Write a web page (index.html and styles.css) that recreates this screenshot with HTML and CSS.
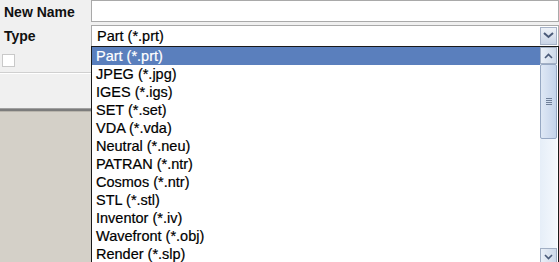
FILE: index.html
```html
<!DOCTYPE html>
<html lang="en">
<head>
  <meta charset="UTF-8">
  <title>Save As</title>
  <link rel="stylesheet" href="styles.css">
</head>
<body>
<div class="dialog">
  <div class="form">
    <div class="row">
      <label class="label">New Name</label>
      <div class="text-input"></div>
    </div>
    <div class="row">
      <label class="label">Type</label>
      <div class="combo">
        <span class="combo-value">Part (*.prt)</span>
        <span class="combo-btn">
          <svg width="11" height="7" viewBox="0 0 11 7"><path d="M1 1 L5.5 5 L10 1" fill="none" stroke="#4a5a78" stroke-width="2"/></svg>
        </span>
      </div>
    </div>
    <div class="row check-row">
      <span class="checkbox"></span>
    </div>
  </div>
  <div class="divider"></div>
  <div class="panel-rest"></div>
  <div class="band"></div>
  <div class="workspace"></div>

  <!-- open drop-down list -->
  <div class="dropdown">
    <ul class="options">
      <li class="selected">Part (*.prt)</li>
      <li>JPEG (*.jpg)</li>
      <li>IGES (*.igs)</li>
      <li>SET (*.set)</li>
      <li>VDA (*.vda)</li>
      <li>Neutral (*.neu)</li>
      <li>PATRAN (*.ntr)</li>
      <li>Cosmos (*.ntr)</li>
      <li>STL (*.stl)</li>
      <li>Inventor (*.iv)</li>
      <li>Wavefront (*.obj)</li>
      <li>Render (*.slp)</li>
    </ul>
    <div class="scrollbar">
      <div class="sb-btn">
        <svg width="9" height="6" viewBox="0 0 9 6"><path d="M1 5 L4.5 1.5 L8 5" fill="none" stroke="#4a5a78" stroke-width="1.6"/></svg>
      </div>
      <div class="sb-thumb">
        <span class="grip"></span>
      </div>
      <div class="sb-track"></div>
      <div class="sb-btn">
        <svg width="9" height="6" viewBox="0 0 9 6"><path d="M1 1 L4.5 4.5 L8 1" fill="none" stroke="#4a5a78" stroke-width="1.6"/></svg>
      </div>
    </div>
  </div>
</div>
</body>
</html>
```
FILE: styles.css
```css
/* Global */
body {
  margin: 0;
  font-family: "Liberation Sans", Arial, sans-serif;
  font-size: 14.5px;
  color: #000;
  background: #d4d0c8;
}

.dialog {
  position: relative;
  width: 559px;
  height: 262px;
  overflow: hidden;
}

/* Form panel */
.form {
  background: #f0f0f0;
}

.row {
  display: flex;
  align-items: center;
  height: 23px;
}

.row + .row {
  margin-top: 1px;
}

.label {
  width: 91px;
  padding-left: 4px;
  box-sizing: border-box;
  font-size: 14px;
  font-weight: bold;
  color: #111;
}

.text-input {
  flex: 1;
  height: 22px;
  box-sizing: border-box;
  background: #fff;
  border: 1px solid #a9a9a9;
  align-self: flex-start;
}

.combo {
  flex: 1;
  display: flex;
  align-items: center;
  height: 22px;
  box-sizing: border-box;
  background: #fff;
  border: 1px solid #a9a9a9;
  padding-left: 5px;
  -webkit-text-stroke: 0.2px #000;
}

.combo-value {
  flex: 1;
}

.combo-btn {
  width: 17px;
  height: 18px;
  margin-right: 1px;
  display: flex;
  align-items: center;
  justify-content: center;
  background: linear-gradient(#eef2f8, #c9d4e6);
  border: 1px solid #a7b3c8;
  box-sizing: border-box;
}

.check-row {
  height: 24px;
}

.checkbox {
  width: 11px;
  height: 11px;
  margin-left: 2px;
  background: #fff;
  border: 1px solid #c9c9c9;
}

.divider {
  height: 1px;
  background: #d0d0d0;
  border-bottom: 1px solid #fff;
}

.panel-rest {
  height: 34px;
  background: #f0f0f0;
}

.band {
  height: 2px;
  background: #7c7c7c;
  border-top: 1px solid #a0a0a0;
  border-bottom: 1px solid #b8b4ac;
}

.workspace {
  height: 160px;
  background: #d4d0c8;
}

/* Drop-down list */
.dropdown {
  position: absolute;
  left: 91px;
  top: 46px;
  width: 468px;
  height: 220px;
  box-sizing: border-box;
  background: #fff;
  border: 1px solid #1a1a1a;
  display: flex;
}

.options {
  list-style: none;
  margin: 0;
  padding: 0;
  flex: 1;
  -webkit-text-stroke: 0.2px #000;
}

.options li {
  height: 18px;
  line-height: 18px;
  padding-left: 4px;
  white-space: nowrap;
}

.options li.selected {
  background: #5a7fbd;
  color: #fff;
  -webkit-text-stroke: 0.2px #fff;
}

.scrollbar {
  width: 17px;
  margin-right: 1px;
  display: flex;
  flex-direction: column;
  background: linear-gradient(90deg, #e6eef8, #f4f8fd);
}

.sb-btn {
  height: 17px;
  display: flex;
  align-items: center;
  justify-content: center;
  background: linear-gradient(90deg, #eaf0f8, #cdd8e8);
  border: 1px solid #a2afc4;
  box-sizing: border-box;
}

.sb-thumb {
  height: 75px;
  display: flex;
  align-items: center;
  justify-content: center;
  background: linear-gradient(90deg, #dfe8f5, #c4d3ea);
  border: 1px solid #97a8c3;
  border-radius: 2px;
  box-sizing: border-box;
}

.grip {
  width: 6px;
  height: 7px;
  background: repeating-linear-gradient(#6f7f99 0 1px, transparent 1px 2px);
}

.sb-track {
  flex: 1;
}
```
